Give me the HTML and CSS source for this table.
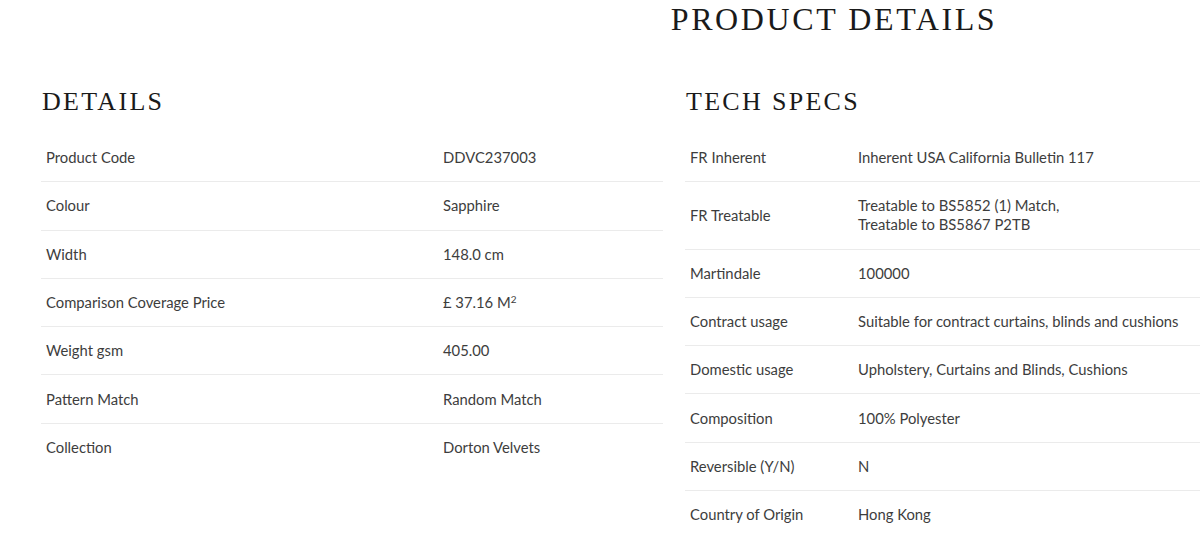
FILE: index.html
```html
<!DOCTYPE html>
<html lang="en">
<head>
<meta charset="utf-8">
<title>Product Details</title>
<link rel="stylesheet" href="styles.css">
</head>
<body>
<div class="page">
  <h1 class="page-title">PRODUCT DETAILS</h1>
  <div class="columns">
    <section class="panel panel-details">
      <h2 class="panel-title">DETAILS</h2>
      <table class="spec spec-details">
        <tbody>
          <tr><th>Product Code</th><td>DDVC237003</td></tr>
          <tr><th>Colour</th><td>Sapphire</td></tr>
          <tr><th>Width</th><td>148.0 cm</td></tr>
          <tr><th>Comparison Coverage Price</th><td>£ 37.16 M<sup>2</sup></td></tr>
          <tr><th>Weight gsm</th><td>405.00</td></tr>
          <tr><th>Pattern Match</th><td>Random Match</td></tr>
          <tr><th>Collection</th><td>Dorton Velvets</td></tr>
        </tbody>
      </table>
    </section>
    <section class="panel panel-tech">
      <h2 class="panel-title">TECH SPECS</h2>
      <table class="spec spec-tech">
        <tbody>
          <tr><th>FR Inherent</th><td>Inherent USA California Bulletin 117</td></tr>
          <tr><th>FR Treatable</th><td>Treatable to BS5852 (1) Match,<br>Treatable to BS5867 P2TB</td></tr>
          <tr><th>Martindale</th><td>100000</td></tr>
          <tr><th>Contract usage</th><td>Suitable for contract curtains, blinds and cushions</td></tr>
          <tr><th>Domestic usage</th><td>Upholstery, Curtains and Blinds, Cushions</td></tr>
          <tr><th>Composition</th><td>100% Polyester</td></tr>
          <tr><th>Reversible (Y/N)</th><td>N</td></tr>
          <tr><th>Country of Origin</th><td>Hong Kong</td></tr>
        </tbody>
      </table>
    </section>
  </div>
</div>
</body>
</html>
```
FILE: styles.css
```css
html, body {
  margin: 0;
  padding: 0;
  background: #ffffff;
  overflow: hidden;
}

.page {
  width: 1668px;
  font-family: "Lato", "Open Sans", sans-serif;
  color: #3d3d3d;
}

.page-title {
  margin: 0;
  text-align: center;
  font-family: "Liberation Serif", "Times New Roman", serif;
  font-weight: 400;
  font-size: 32px;
  line-height: 38px;
  letter-spacing: 2.6px;
  color: #1a1a1a;
}

.columns {
  display: flex;
  gap: 22px;
  padding-left: 41px;
}

.panel {
  width: 622px;
  flex: none;
}

.panel-title {
  margin: 48px 0 16px 1px;
  font-family: "Liberation Serif", "Times New Roman", serif;
  font-weight: 400;
  font-size: 26px;
  line-height: 32px;
  letter-spacing: 2.3px;
  color: #1a1a1a;
}

.spec {
  width: 100%;
  border-collapse: collapse;
  font-size: 14.8px;
  line-height: 19px;
}

.spec th,
.spec td {
  padding: 14.15px 5px;
  text-align: left;
  vertical-align: middle;
  font-weight: 400;
  border-bottom: 1px solid #ebebeb;
}

.spec tr:last-child th,
.spec tr:last-child td {
  border-bottom: none;
}

.spec-tech tr:last-child th,
.spec-tech tr:last-child td {
  border-bottom: 1px solid #ebebeb;
}

.spec-details th {
  width: 387px;
}

.spec-tech th {
  width: 158px;
}

.spec sup {
  font-size: 10px;
  line-height: 0;
  vertical-align: 5px;
}
```
